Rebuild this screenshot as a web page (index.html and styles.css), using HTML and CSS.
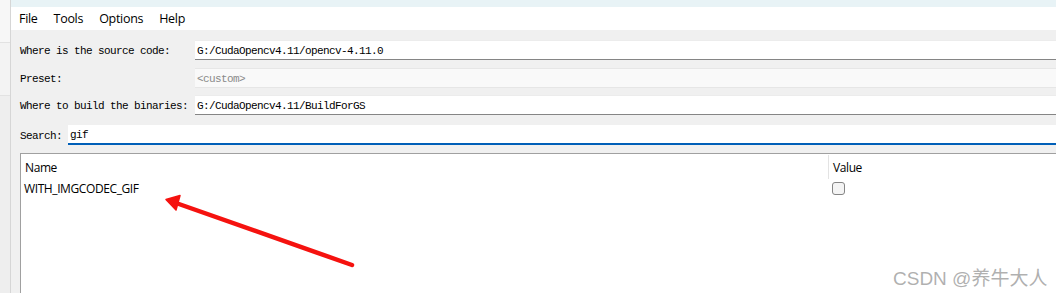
FILE: index.html
```html
<!DOCTYPE html>
<html>
<head>
<meta charset="utf-8">
<link rel="stylesheet" href="styles.css">
</head>
<body>
<div class="screen">
  <div class="side">
    <div class="side-a"></div>
    <div class="side-b"></div>
    <div class="side-c"></div>
  </div>
  <div class="win">
    <div class="titlestrip"></div>
    <div class="menubar">
      <span class="menu">File</span>
      <span class="menu">Tools</span>
      <span class="menu">Options</span>
      <span class="menu">Help</span>
    </div>
    <div class="panel">
      <div class="form">
        <div class="row r1">
          <span class="label">Where is the source code:</span>
          <div class="field">G:/CudaOpencv4.11/opencv-4.11.0</div>
        </div>
        <div class="row r2">
          <span class="label">Preset:</span>
          <div class="field disabled">&lt;custom&gt;</div>
        </div>
        <div class="row r3">
          <span class="label">Where to build the binaries:</span>
          <div class="field">G:/CudaOpencv4.11/BuildForGS</div>
        </div>
        <div class="row search">
          <span class="label slabel">Search:</span>
          <div class="field sfield">gif</div>
        </div>
      </div>
      <div class="table">
        <div class="thead">
          <div class="th name">Name</div>
          <div class="th value">Value</div>
        </div>
        <div class="trow">
          <div class="td name">WITH_IMGCODEC_GIF</div>
          <div class="td value"><span class="check"></span></div>
        </div>
      </div>
    </div>
  </div>
</div>
<svg class="arrow" width="1056" height="293" viewBox="0 0 1056 293">
  <line x1="352" y1="265" x2="176" y2="203" stroke="#f5120f" stroke-width="4.5" stroke-linecap="round"/>
  <polygon points="166,199.5 180,195.5 176,210" fill="#f5120f" stroke="#f5120f" stroke-width="1.5" stroke-linejoin="round"/>
</svg>
<div class="watermark">CSDN @养牛大人</div>
</body>
</html>
```
FILE: styles.css
```css
html, body {
  margin: 0;
  padding: 0;
  width: 1056px;
  height: 293px;
  overflow: hidden;
  background: #f0f0f0;
}
.screen {
  display: flex;
  width: 1056px;
  height: 293px;
}
.side {
  width: 10px;
  flex: none;
  border-right: 1px solid #d6d6d6;
  display: flex;
  flex-direction: column;
}
.side-a {
  height: 42px;
  background: #f7f7f7;
  border-bottom: 1px solid #e2e2e2;
}
.side-b {
  height: 52px;
  background: #f3f3f3;
  border-bottom: 1px solid #e2e2e2;
}
.side-c {
  flex: 1;
  background: #eeeeee;
}
.win {
  flex: 1;
  display: flex;
  flex-direction: column;
  min-width: 0;
}
.titlestrip {
  height: 7px;
  background: #e8f3f6;
}
.menubar {
  height: 23px;
  background: #ffffff;
  display: flex;
  align-items: center;
  gap: 16px;
  padding-left: 8px;
  font-family: "Open Sans", "Noto Sans", sans-serif;
  font-size: 12.5px;
  letter-spacing: -0.3px;
  color: #000;
}
.panel {
  flex: 1;
  background: #f0f0f0;
  padding: 10px 0 0 9px;
  display: flex;
  flex-direction: column;
}
.form {
  display: flex;
  flex-direction: column;
}
.row {
  display: flex;
  align-items: center;
  height: 20px;
}
.r2 { margin-top: 8px; }
.r3 { margin-top: 7px; }
.search { margin-top: 10px; }
.label {
  width: 175px;
  flex: none;
  font-family: "Liberation Mono", monospace;
  font-size: 11px;
  letter-spacing: -0.6px;
  color: #000;
  padding-top: 1px;
}
.slabel {
  width: 48px;
}
.field {
  flex: 1;
  box-sizing: border-box;
  background: #ffffff;
  border-top: 1px solid #ececec;
  border-bottom: 1px solid #858585;
  padding-left: 2px;
  padding-top: 1px;
  display: flex;
  align-items: center;
  font-family: "Liberation Mono", monospace;
  font-size: 11px;
  letter-spacing: -0.6px;
  color: #000;
  white-space: nowrap;
  overflow: hidden;
  height: 20px;
}
.field.disabled {
  background: #f9f9f9;
  border-top: 1px solid #e6e6e6;
  border-bottom: 1px solid #e6e6e6;
  color: #8a8a8a;
}
.field.sfield {
  border-top: none;
  border-bottom: 2px solid #005fb8;
}
.table {
  margin-top: 8px;
  flex: 1;
  background: #ffffff;
  border-top: 1px solid #a0a0a0;
  border-left: 1px solid #a0a0a0;
  display: flex;
  flex-direction: column;
  font-family: "Open Sans", "Noto Sans", sans-serif;
  font-size: 12px;
  letter-spacing: -0.4px;
  color: #000;
}
.thead, .trow {
  display: flex;
}
.thead { height: 24px; margin-top: 1px; }
.trow { height: 18px; }
.th, .td {
  display: flex;
  align-items: center;
  white-space: nowrap;
}
.name {
  width: 803px;
  padding-left: 4px;
  flex: none;
}
.td.name { padding-left: 3px; width: 804px; }
.th.value {
  border-left: 1px solid #e3e3e3;
  padding-left: 4px;
}
.td.value {
  padding-left: 4px;
}
.check {
  display: block;
  width: 11px;
  height: 11px;
  border: 1px solid #858585;
  border-radius: 3px;
  background: #f4f4f4;
}
.arrow {
  position: absolute;
  left: 0;
  top: 0;
  pointer-events: none;
}
.watermark {
  position: absolute;
  left: 893px;
  top: 263px;
  font-family: "Liberation Sans", "Noto Sans CJK SC", sans-serif;
  font-size: 19px;
  color: rgba(150, 150, 150, 0.75);
  white-space: nowrap;
}
```
